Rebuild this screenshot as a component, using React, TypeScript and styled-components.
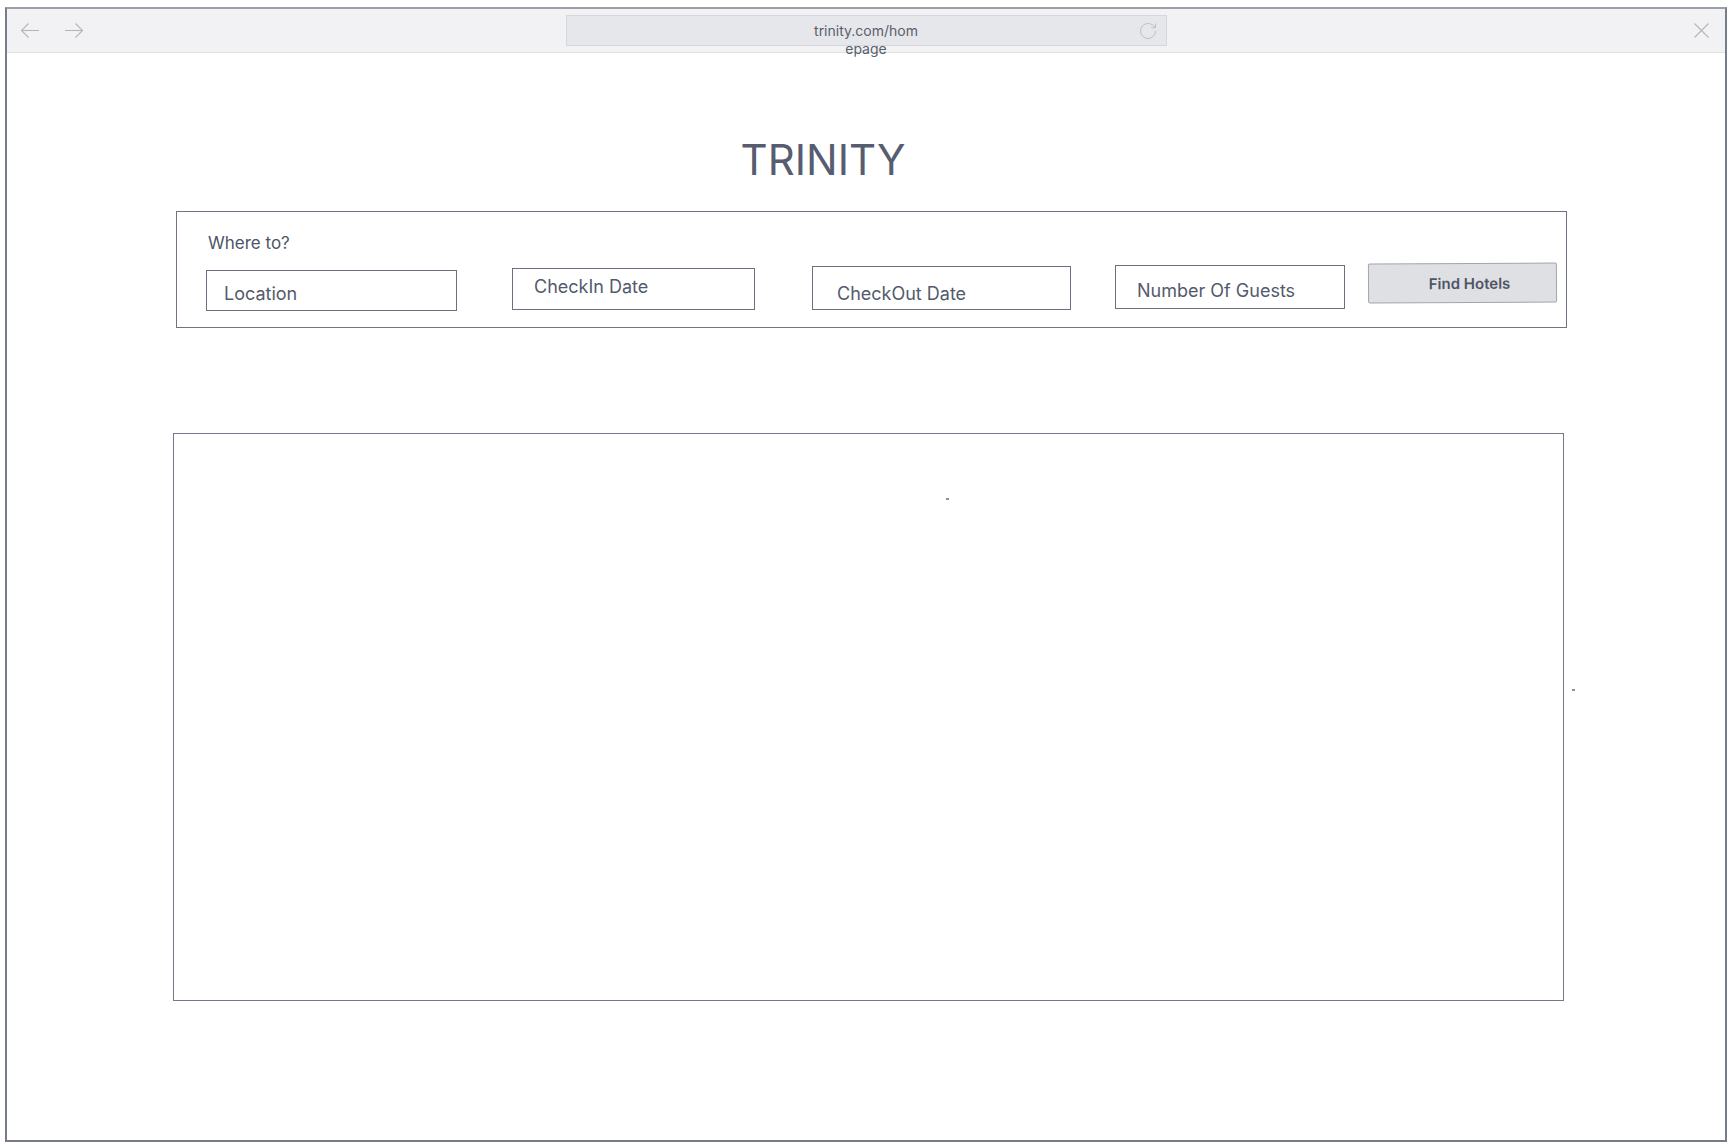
import styled, { createGlobalStyle } from 'styled-components';

const GlobalStyle = createGlobalStyle`
  * {
    box-sizing: border-box;
  }
  body {
    margin: 0;
    background: #ffffff;
    font-family: Inter, 'Noto Sans', sans-serif;
  }
`;

const fields = [
  { label: 'Location', w: 251, h: 41, ml: 0, mt: 7, pl: 17, ty: 3 },
  { label: 'CheckIn Date', w: 243, h: 42, ml: 55, mt: 5, pl: 21, ty: -3 },
  { label: 'CheckOut Date', w: 259, h: 44, ml: 57, mt: 3, pl: 24, ty: 5 },
  { label: 'Number Of Guests', w: 230, h: 44, ml: 44, mt: 2, pl: 21, ty: 3 },
];

const Page = styled.div`
  padding: 7px 0 0 5px;
`;

const Frame = styled.div`
  position: relative;
  width: 1722px;
  height: 1135px;
  border: 2px solid #777c8b;
  border-top-color: #9a9ea9;
  display: flex;
  flex-direction: column;
`;

const TopBar = styled.div`
  height: 44px;
  background: #f2f2f4;
  border-bottom: 1px solid #dfe0e4;
  display: grid;
  grid-template-columns: 1fr 601px 1fr;
  align-items: center;
`;

const NavGroup = styled.div`
  display: flex;
  align-items: center;
  gap: 24px;
  padding-left: 13px;
`;

const CloseGroup = styled.div`
  display: flex;
  justify-content: flex-end;
  padding-right: 16px;
`;

const UrlBar = styled.div`
  height: 31px;
  background: #e6e7ea;
  border: 1px solid #d6d7dc;
  display: grid;
  grid-template-columns: 30px 1fr 30px;
  align-items: center;
`;

const UrlText = styled.div`
  height: 18px;
  line-height: 18px;
  font-size: 14px;
  color: #595e6d;
  text-align: center;
  white-space: nowrap;
  overflow: visible;
  position: relative;
  z-index: 1;
`;

const Reload = styled.div`
  display: flex;
  justify-content: center;
  padding-right: 6px;
`;

const Content = styled.div`
  display: flex;
  flex-direction: column;
  align-items: flex-start;
  padding-left: 166px;
`;

const Title = styled.h1`
  margin: 81px 0 0 0;
  width: 1394px;
  padding-right: 94px;
  text-align: center;
  font-size: 42px;
  line-height: 52px;
  font-weight: 400;
  color: #575d70;
`;

const SearchPanel = styled.div`
  margin: 25px 0 0 3px;
  width: 1391px;
  border: 1px solid #6f7484;
  padding: 21px 0 16px 29px;
`;

const Prompt = styled.div`
  font-size: 17px;
  line-height: 20px;
  color: #4e5467;
  padding-left: 2px;
`;

const FieldRow = styled.div`
  display: flex;
  align-items: flex-start;
  margin-top: 10px;
`;

const Field = styled.div<{ $w: number; $h: number; $ml: number; $mt: number; $pl: number; $ty: number }>`
  width: ${(p) => p.$w}px;
  height: ${(p) => p.$h}px;
  margin-left: ${(p) => p.$ml}px;
  margin-top: ${(p) => p.$mt}px;
  padding-left: ${(p) => p.$pl}px;
  padding-top: ${(p) => Math.max(p.$ty, 0) * 2}px;
  padding-bottom: ${(p) => Math.max(-p.$ty, 0) * 2}px;
  border: 1px solid #6b7080;
  display: flex;
  align-items: center;
  font-size: 18px;
  color: #535a6c;
`;

const FindButton = styled.button`
  margin-left: 23px;
  width: 189px;
  height: 40px;
  background: #dfe0e3;
  border: 1px solid #a2a5ae;
  border-radius: 2px;
  font-family: Inter, 'Noto Sans', sans-serif;
  font-size: 15px;
  font-weight: 600;
  color: #4f5566;
  padding: 0 0 0 14px;
  transform: rotate(-0.3deg);
`;

const ResultsBox = styled.div`
  margin-top: 105px;
  width: 1391px;
  height: 568px;
  border: 1px solid #73788a;
`;

const Speck = styled.span<{ $x: number; $y: number }>`
  position: absolute;
  left: ${(p) => p.$x}px;
  top: ${(p) => p.$y}px;
  width: 3px;
  height: 2px;
  background: #8c909b;
`;

const ArrowIcon = ({ flip }: { flip?: boolean }) => (
  <svg width="20" height="15" viewBox="0 0 20 15" fill="none" stroke="#b3b6be" strokeWidth="1.1"
    style={{ transform: flip ? 'scaleX(-1)' : undefined }}>
    <path d="M19 7.5H1.5" />
    <path d="M8.5 0.5L1.5 7.5L8.5 14.5" />
  </svg>
);

const CloseIcon = () => (
  <svg width="15" height="15" viewBox="0 0 15 15" fill="none" stroke="#b3b6be" strokeWidth="1.1">
    <path d="M0.5 0.5L14.5 14.5M14.5 0.5L0.5 14.5" />
  </svg>
);

const ReloadIcon = () => (
  <svg width="20" height="20" viewBox="0 0 24 24" fill="none" stroke="#b5b8c0" strokeWidth="1">
    <path d="M21 12a9 9 0 1 1-9-9c2.52 0 4.93 1 6.74 2.74L21 8" />
    <path d="M21 3v5h-5" />
  </svg>
);

const App = () => {
  return (
    <Page>
      <GlobalStyle />
      <Frame>
        <TopBar>
          <NavGroup>
            <ArrowIcon />
            <ArrowIcon flip />
          </NavGroup>
          <UrlBar>
            <span />
            <UrlText>
              trinity.com/hom
              <br />
              epage
            </UrlText>
            <Reload>
              <ReloadIcon />
            </Reload>
          </UrlBar>
          <CloseGroup>
            <CloseIcon />
          </CloseGroup>
        </TopBar>
        <Content>
          <Title>TRINITY</Title>
          <SearchPanel>
            <Prompt>Where to?</Prompt>
            <FieldRow>
              {fields.map((f) => (
                <Field key={f.label} $w={f.w} $h={f.h} $ml={f.ml} $mt={f.mt} $pl={f.pl} $ty={f.ty}>
                  {f.label}
                </Field>
              ))}
              <FindButton>Find Hotels</FindButton>
            </FieldRow>
          </SearchPanel>
          <ResultsBox />
        </Content>
        <Speck $x={939} $y={489} />
        <Speck $x={1565} $y={680} />
      </Frame>
    </Page>
  );
};

export default App;
